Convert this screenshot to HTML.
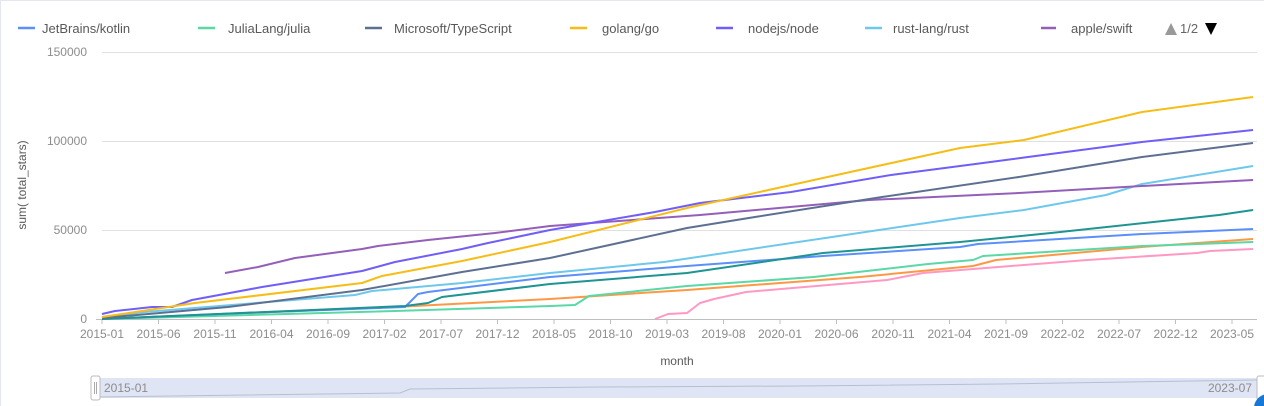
<!DOCTYPE html>
<html><head><meta charset="utf-8"><style>
html,body{margin:0;padding:0;background:#fff;width:1264px;height:406px;overflow:hidden;font-family:"Liberation Sans",sans-serif;}
</style></head><body>
<svg width="1264" height="406" xmlns="http://www.w3.org/2000/svg" font-family="Liberation Sans, sans-serif">
<rect x="0.5" y="0.5" width="1300" height="420" fill="#fff" stroke="#e4e7ef"/>
<g font-size="13" fill="#595959">
<line x1="18" y1="28" x2="35" y2="28" stroke="#5B8FF9" stroke-width="2.5"/><text x="42" y="33">JetBrains/kotlin</text>
<line x1="198" y1="28" x2="215" y2="28" stroke="#5AD8A6" stroke-width="2.5"/><text x="228" y="33">JuliaLang/julia</text>
<line x1="365" y1="28" x2="382" y2="28" stroke="#5D7092" stroke-width="2.5"/><text x="394" y="33">Microsoft/TypeScript</text>
<line x1="570" y1="28" x2="587" y2="28" stroke="#F6BD16" stroke-width="2.5"/><text x="602" y="33">golang/go</text>
<line x1="716" y1="28" x2="733" y2="28" stroke="#6F5EF9" stroke-width="2.5"/><text x="748" y="33">nodejs/node</text>
<line x1="865" y1="28" x2="882" y2="28" stroke="#6DC8EC" stroke-width="2.5"/><text x="893" y="33">rust-lang/rust</text>
<line x1="1041" y1="28" x2="1056" y2="28" stroke="#945FB9" stroke-width="2.5"/><text x="1071" y="33">apple/swift</text>
<polygon points="1165,35 1177,35 1171,23" fill="#999"/><text x="1180" y="33" fill="#666">1/2</text><polygon points="1205,23 1217,23 1211,35" fill="#000"/>
</g>
<g stroke="#e0e0e0" stroke-width="1">
<line x1="102" y1="52.5" x2="1257" y2="52.5"/><line x1="102" y1="141.5" x2="1257" y2="141.5"/><line x1="102" y1="230.5" x2="1257" y2="230.5"/>
</g>
<line x1="96" y1="319.5" x2="1257" y2="319.5" stroke="#bfbfbf"/>
<g font-size="12" fill="#8c8c8c" text-anchor="end">
<text x="87" y="56">150000</text><text x="87" y="145">100000</text><text x="87" y="234">50000</text><text x="87" y="323">0</text>
</g>
<text transform="translate(26,185) rotate(-90)" font-size="12" fill="#595959" text-anchor="middle">sum( total_stars)</text>
<g stroke="#bfbfbf">
<line x1="102" y1="320" x2="102" y2="324"/><line x1="158.5" y1="320" x2="158.5" y2="324"/><line x1="215" y1="320" x2="215" y2="324"/><line x1="271.5" y1="320" x2="271.5" y2="324"/><line x1="328" y1="320" x2="328" y2="324"/><line x1="384.5" y1="320" x2="384.5" y2="324"/><line x1="441" y1="320" x2="441" y2="324"/><line x1="497.5" y1="320" x2="497.5" y2="324"/><line x1="554" y1="320" x2="554" y2="324"/><line x1="610.5" y1="320" x2="610.5" y2="324"/><line x1="667" y1="320" x2="667" y2="324"/><line x1="723.5" y1="320" x2="723.5" y2="324"/><line x1="780" y1="320" x2="780" y2="324"/><line x1="836.5" y1="320" x2="836.5" y2="324"/><line x1="893" y1="320" x2="893" y2="324"/><line x1="949.5" y1="320" x2="949.5" y2="324"/><line x1="1006" y1="320" x2="1006" y2="324"/><line x1="1062.5" y1="320" x2="1062.5" y2="324"/><line x1="1119" y1="320" x2="1119" y2="324"/><line x1="1175.5" y1="320" x2="1175.5" y2="324"/><line x1="1232" y1="320" x2="1232" y2="324"/>
</g>
<g font-size="12" fill="#8c8c8c" text-anchor="middle">
<text x="102" y="338">2015-01</text><text x="158.5" y="338">2015-06</text><text x="215" y="338">2015-11</text><text x="271.5" y="338">2016-04</text><text x="328" y="338">2016-09</text><text x="384.5" y="338">2017-02</text><text x="441" y="338">2017-07</text><text x="497.5" y="338">2017-12</text><text x="554" y="338">2018-05</text><text x="610.5" y="338">2018-10</text><text x="667" y="338">2019-03</text><text x="723.5" y="338">2019-08</text><text x="780" y="338">2020-01</text><text x="836.5" y="338">2020-06</text><text x="893" y="338">2020-11</text><text x="949.5" y="338">2021-04</text><text x="1006" y="338">2021-09</text><text x="1062.5" y="338">2022-02</text><text x="1119" y="338">2022-07</text><text x="1175.5" y="338">2022-12</text><text x="1232" y="338">2023-05</text>
<text x="677" y="365" fill="#595959">month</text>
</g>
<g fill="none" stroke-width="2" stroke-linejoin="round">
<polyline stroke="#FF99C3" points="655,319 668,314 687,313 700,303 714,299 746,292 887,280 923,273 1087,260 1197,253 1210,251 1253,249"/>
<polyline stroke="#FF9845" points="102,319 395,307 550,299 687,290 860,277 973,266 996,260 1142,247 1253,239"/>
<polyline stroke="#5AD8A6" points="102,319 395,311 550,306 575,305 589,296 687,286 814,277 928,264 973,260 983,256 1142,246 1253,242"/>
<polyline stroke="#5B8FF9" points="102,319 245,313 405,307 418,294 428,292 550,277 687,266 823,256 960,247 978,244 1142,234 1253,229"/>
<polyline stroke="#1E9493" points="102,319 405,306 428,303 442,297 550,284 687,273 823,253 960,242 1051,233 1219,215 1253,210"/>
<polyline stroke="#6DC8EC" points="102,317 145,312 355,295 372,291 462,283 550,273 664,262 832,237 960,218 1024,210 1106,195 1142,184 1253,166"/>
<polyline stroke="#945FB9" points="225,273 258,267 295,258 362,249 378,246 428,240 495,233 550,226 700,215 869,200 1019,193 1142,186 1253,180"/>
<polyline stroke="#5D7092" points="102,318 228,307 362,290 462,272 550,258 687,228 755,217 882,197 1019,177 1142,157 1253,143"/>
<polyline stroke="#6F5EF9" points="102,314 115,311 152,307 172,307 192,300 262,287 362,271 395,262 462,249 488,243 550,230 655,212 700,203 791,192 891,175 983,163 1028,157 1142,142 1253,130"/>
<polyline stroke="#F6BD16" points="102,317 195,303 362,283 382,276 462,261 550,242 687,208 823,178 960,148 1024,140 1142,112 1253,97"/>
</g>
<rect x="96" y="378" width="1161" height="20" fill="#dfe5f4"/>
<polyline fill="none" stroke="#b6bfd2" points="96,397 400,393 410,389 600,387 800,386 1000,384 1257,380"/>
<rect x="91" y="376" width="9" height="24" rx="2" fill="#fff" stroke="#bbb"/>
<line x1="94.5" y1="382" x2="94.5" y2="394" stroke="#aaa"/><line x1="96.5" y1="382" x2="96.5" y2="394" stroke="#aaa"/>
<rect x="1257" y="376" width="9" height="24" rx="2" fill="#fff" stroke="#bbb"/>
<text x="104" y="392" font-size="12" fill="#8c8c8c">2015-01</text>
<text x="1252" y="392" font-size="12" fill="#8c8c8c" text-anchor="end">2023-07</text>
<circle cx="1268" cy="408" r="14" fill="#1677d4"/>
</svg>
</body></html>
